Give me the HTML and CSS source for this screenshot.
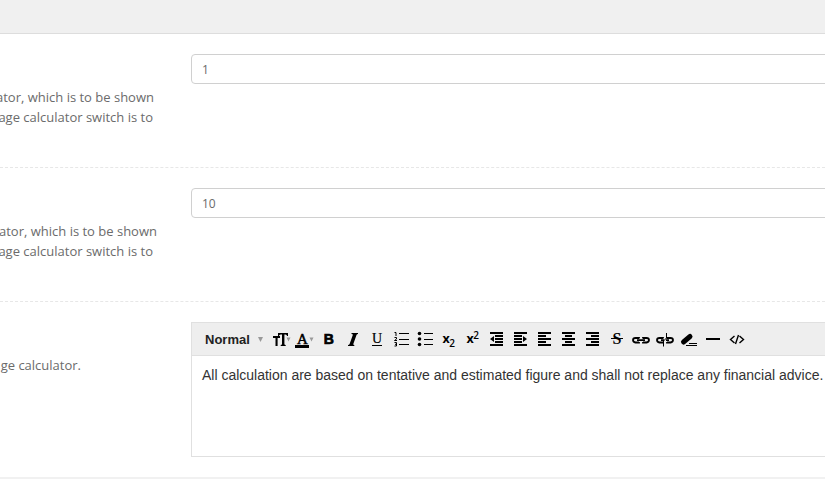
FILE: index.html
```
<!DOCTYPE html>
<html lang="en">
<head>
<meta charset="utf-8">
<title>Calculator settings</title>
<link rel="stylesheet" href="styles.css">
</head>
<body>
<header class="panel-head"></header>
<main>
  <section class="row">
    <div class="hint"><p class="wide">ator, which is to be shown</p><p>age calculator switch is to</p></div>
    <input class="field" type="text" value="1">
  </section>
  <section class="row">
    <div class="hint"><p class="wider">ator, which is to be shown</p><p>age calculator switch is to</p></div>
    <input class="field" type="text" value="10">
  </section>
  <section class="row last">
    <div class="hint"><p class="short">ge calculator.</p></div>
    <div class="editor">
      <div class="toolbar">
        <span class="style">Normal</span>
        <svg class="arrow" viewBox="0 0 5 5"><path d="M0 0h5L2.500 5z"/></svg>
        <svg class="size" width="24" height="24" viewBox="0 0 24 24"><path d="M2 9h7v2H6.600v8H4.500v-8H2zM7 6h10v3h-1q0-1.500-1.500-1.500H13.400V17q0 1 1.300 1v1h-5v-1q1.300 0 1.300-1V7.500H9.700Q8 7.500 8 9H7z"/><path class="muted" d="M15.500 10.500h4l-2 4z"/></svg>
        <svg class="color" width="24" height="24" viewBox="0 0 24 24"><text x="3" y="17" class="serif semi">A</text><path d="M1 18h14v3H1z"/><path class="muted" d="M15.500 10.500h4l-2 4z"/></svg>
        <svg width="24" height="24" viewBox="0 0 24 24"><text x="6.700" y="17" class="bold">B</text></svg>
        <svg width="24" height="24" viewBox="0 0 24 24"><path d="M10.500 6H17v1q-1.200 0-1.500 1l-3.200 9q-.3 1 1 1v1H7v-1q1.300 0 1.600-1l3.200-9q.4-1-1.300-1z"/></svg>
        <svg width="24" height="24" viewBox="0 0 24 24"><text x="7" y="16" class="serif u">U</text><path d="M7 18h10v1H7z"/></svg>
        <svg width="24" height="24" viewBox="0 0 24 24"><path d="M10 6h10v1H10zM10 12h10v1H10zM10 17h10v1H10z"/><path class="fine" d="M5.500 5.500H7V9M5.500 10.500h2v1.500l-2 1.500h2.500M5.500 15.500h2v3.500h-2M6 17.300h1.500"/></svg>
        <svg width="24" height="24" viewBox="0 0 24 24"><circle cx="6.500" cy="6.500" r="1.800"/><circle cx="6.500" cy="12" r="1.800"/><circle cx="6.500" cy="17.500" r="1.800"/><path d="M11 6h9v1h-9zM11 12h9v1h-9zM11 17h9v1h-9z"/></svg>
        <svg width="24" height="24" viewBox="0 0 24 24"><text x="5.600" y="16" class="script">x</text><text x="12.300" y="20" class="num">2</text></svg>
        <svg width="24" height="24" viewBox="0 0 24 24"><text x="5.600" y="16" class="script">x</text><text x="12.300" y="12" class="num">2</text></svg>
        <svg width="24" height="24" viewBox="0 0 24 24"><path d="M5 5h13v2H5zM10 8h8v2h-8zM10 11h8v2h-8zM10 14h8v2h-8zM5 17h13v2H5zM9 9v6l-4-3z"/></svg>
        <svg width="24" height="24" viewBox="0 0 24 24"><path d="M5 5h13v2H5zM5 8h8v2H5zM5 11h8v2H5zM5 14h8v2H5zM5 17h13v2H5zM14 9v6l4-3z"/></svg>
        <svg width="24" height="24" viewBox="0 0 24 24"><path d="M5 5h13v2H5zM5 8h8v2H5zM5 11h13v2H5zM5 14h8v2H5zM5 17h13v2H5z"/></svg>
        <svg width="24" height="24" viewBox="0 0 24 24"><path d="M5 5h13v2H5zM8 8h7v2H8zM5 11h13v2H5zM8 14h7v2H8zM5 17h13v2H5z"/></svg>
        <svg width="24" height="24" viewBox="0 0 24 24"><path d="M5 5h13v2H5zM10 8h8v2h-8zM5 11h13v2H5zM10 14h8v2h-8zM5 17h13v2H5z"/></svg>
        <svg width="24" height="24" viewBox="0 0 24 24"><text x="7.500" y="17" class="serif strong">S</text><path d="M6 11h12v1H6z"/></svg>
        <svg width="24" height="24" viewBox="0 0 24 24"><path class="line" d="M10 11.500V11H6.500Q4 11 4 13t2.500 2.500H10V15M14 11.500V11h3.500q2.500 0 2.500 2t-2.500 2.500H14V15M8 13.200h8"/></svg>
        <svg width="24" height="24" viewBox="0 0 24 24"><path class="line" d="M10 11.500V11H6.500Q4 11 4 13t2.500 2.500H10V15M14 11.500V11h3.500q2.500 0 2.500 2t-2.500 2.500H14V15M8 13.200h3M13 13.200h3"/><path class="fine" d="M13.500 6v5l-3 3v5.500"/></svg>
        <svg width="24" height="24" viewBox="0 0 24 24"><path class="eraser" d="m6.500 15 6.500-5.500"/><path d="M12 16h8v1h-8zM9 18h11v1H9z"/></svg>
        <svg width="24" height="24" viewBox="0 0 24 24"><path d="M5 11h14v2H5z"/></svg>
        <svg width="24" height="24" viewBox="0 0 24 24"><path class="code" d="M9.500 9 5.500 12.500l4 3.500M14.500 9l4 3.500-4 3.500M13.500 8l-3 9"/></svg>
      </div>
      <div class="content">All calculation are based on tentative and estimated figure and shall not replace any financial advice.</div>
    </div>
  </section>
</main>
</body>
</html>
```
FILE: styles.css
```
* { box-sizing: border-box; }
body {
  margin: 0;
  height: 479px;
  overflow: hidden;
  background: #fff;
  font: 13px/20px "Open Sans", sans-serif;
  color: #6b6b6b;
}
.panel-head { height: 34px; background: #f0f0f0; border-bottom: 1px solid #ddd; }
.row {
  display: grid;
  grid-template-columns: 191px 650px;
  height: 134px;
  padding-top: 20px;
  align-items: start;
  border-bottom: 1px dashed #e7e7e7;
}
.row.last { height: 177px; border-bottom: 2px solid #f1f1f1; }
.hint { padding: 33px 38px 0 0; display: flex; flex-direction: column; align-items: flex-end; }
.hint p { margin: 0; white-space: nowrap; }
.hint .wide { margin-right: -1px; }
.hint .wider { margin-right: -4px; }
.hint .short { margin-right: 72px; }
.field {
  width: 650px;
  height: 30px;
  padding: 1px 10px 0;
  border: 1px solid #d0d0d0;
  border-radius: 4px;
  background: #fff;
  font: 12px "Open Sans", sans-serif;
  color: #6b6b6b;
}
.editor { height: 135px; border: 1px solid #e0e0e0; }
.toolbar {
  display: flex;
  align-items: center;
  height: 33px;
  padding-left: 13px;
  background: #eee;
  border-bottom: 1px solid #e0e0e0;
}
.toolbar svg { flex: none; fill: #000; }
.style { width: 53px; font: bold 13px "Liberation Sans", sans-serif; color: #222; }
.toolbar .arrow { width: 5px; height: 5px; margin-right: 8px; fill: #999; }
.toolbar .color { margin: 0 -2px 0 -1px; }
.toolbar .color + svg { margin-left: 1px; }
.toolbar .muted { fill: #999; }
.serif { font: 14px "Liberation Serif", serif; }
.semi { font-size: 15px; stroke: #000; stroke-width: .5px; }
.u { stroke: #000; stroke-width: .2px; }
.strong { font-size: 16px; font-weight: bold; }
.bold { font: bold 14px "Liberation Sans", sans-serif; stroke: #000; stroke-width: .7px; }
.script { font: bold 12.500px "Open Sans", sans-serif; }
.num { font: 600 10px "Open Sans", sans-serif; }
.line { fill: none; stroke: #000; stroke-width: 1.800; }
.fine { fill: none; stroke: #000; stroke-width: 1; }
.eraser { fill: none; stroke: #000; stroke-width: 5; stroke-linecap: round; }
.code { fill: none; stroke: #000; stroke-width: 1.400; }
.content {
  padding: 9px 10px;
  white-space: nowrap;
  font: 14px/20px "Liberation Sans", sans-serif;
  letter-spacing: -.005px;
  color: #333;
}
```
